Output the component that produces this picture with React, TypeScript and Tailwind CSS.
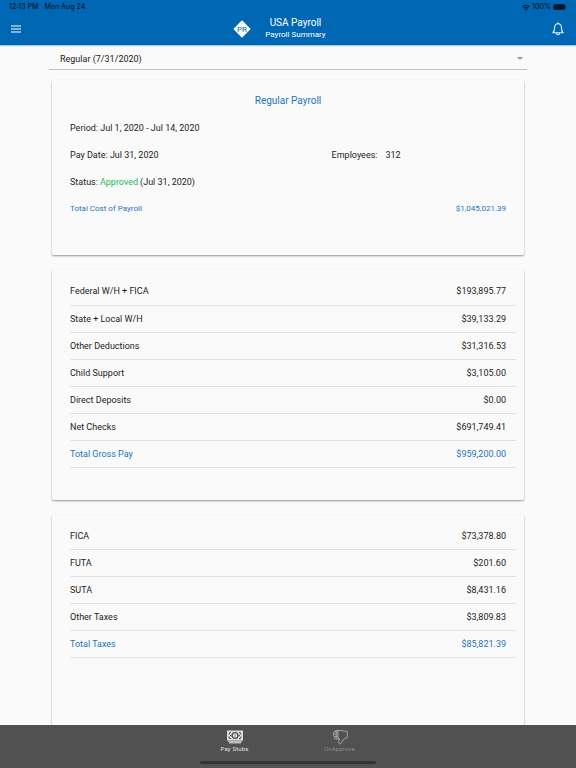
import React from 'react';

type Line = { label: string; amount: string; total?: boolean };

const withholdings: Line[] = [
  { label: 'Federal W/H + FICA', amount: '$193,895.77' },
  { label: 'State + Local W/H', amount: '$39,133.29' },
  { label: 'Other Deductions', amount: '$31,316.53' },
  { label: 'Child Support', amount: '$3,105.00' },
  { label: 'Direct Deposits', amount: '$0.00' },
  { label: 'Net Checks', amount: '$691,749.41' },
  { label: 'Total Gross Pay', amount: '$959,200.00', total: true },
];

const taxes: Line[] = [
  { label: 'FICA', amount: '$73,378.80' },
  { label: 'FUTA', amount: '$201.60' },
  { label: 'SUTA', amount: '$8,431.16' },
  { label: 'Other Taxes', amount: '$3,809.83' },
  { label: 'Total Taxes', amount: '$85,821.39', total: true },
];

const MenuIcon = () => (
  <svg className="h-2 w-[10px]" viewBox="0 0 20 16" stroke="#fff" strokeWidth="2.4">
    <path d="M0 2h20M0 8h20M0 14h20" />
  </svg>
);

const WifiIcon = () => (
  <svg className="h-[7px] w-2" viewBox="0 0 16 13" fill="none" stroke="#04182b" strokeWidth="2.6">
    <path d="M1 5.2a10 10 0 0 1 14 0" />
    <path d="M3.8 8.2a6 6 0 0 1 8.4 0" />
    <path d="M8 12.8 5.4 10a3.8 3.8 0 0 1 5.2 0z" fill="#04182b" stroke="none" />
  </svg>
);

const BatteryIcon = () => (
  <svg className="h-[6px] w-[14px]" viewBox="0 0 28 12" fill="#04182b">
    <rect x="0.5" y="0.5" width="24" height="11" rx="3" />
    <path d="M25.6 4v4c1-.3 1.6-1.1 1.6-2s-.6-1.7-1.6-2z" />
  </svg>
);

const BellIcon = () => (
  <svg className="h-[14px] w-3" viewBox="0 0 24 28" fill="none" stroke="#e8f5ff" strokeWidth="2.2" strokeLinejoin="round">
    <path d="M12 3.5c-4.3 0-6.8 3.2-6.8 7.5 0 6-1.2 8.5-3.4 10.5h20.4c-2.2-2-3.4-4.5-3.4-10.5 0-4.3-2.5-7.5-6.8-7.5z" />
    <path d="M10.5 3.2a1.6 1.6 0 0 1 3 0" />
    <path d="M8.8 22c.3 2.3 1.5 3.5 3.2 3.5s2.9-1.2 3.2-3.5" />
  </svg>
);

const LogoIcon = () => (
  <svg className="h-[18px] w-[18px]" viewBox="0 0 18 18">
    <rect x="2.8" y="2.8" width="12.4" height="12.4" rx="0.8" fill="#fff" transform="rotate(45 9 9)" />
    <text x="9" y="11.5" textAnchor="middle" fontFamily="Roboto, sans-serif" fontSize="8" fill="#0067b5">PR</text>
  </svg>
);

const MoneyIcon = () => (
  <svg className="h-[14px] w-4" viewBox="0 0 32 28">
    <rect x="0" y="1" width="32" height="20" fill="#dcdcdc" />
    <path d="M2 21h28v3H2zM4 24h24v3H4z" fill="#bdbdbd" />
    <path d="M8 4.500C5 5 4 7 4 9M8 17.500c-3-.5-4-2.500-4-4.500M24 4.500c3 .5 4 2.500 4 4.500M24 17.500c3-.5 4-2.500 4-4.500" fill="none" stroke="#515151" strokeWidth="2.2" />
    <circle cx="16" cy="11" r="5.800" fill="#dcdcdc" stroke="#515151" strokeWidth="2.8" />
    <path d="M16 8.500v5" stroke="#9a9a9a" strokeWidth="2" />
    <circle cx="7.200" cy="11" r="1.300" fill="#515151" />
    <circle cx="24.800" cy="11" r="1.300" fill="#515151" />
  </svg>
);

const ThumbDownIcon = () => (
  <svg className="h-4 w-4" viewBox="0 0 32 32" fill="none" stroke="#a6a6a6" strokeWidth="1.900" strokeLinejoin="round" strokeLinecap="round">
    <path d="M12 3.500C15 2.500 20 2.500 25 4.500l5-.5c1 4.500 1 9 0 14l-4.500 1c-2.500 1.500-4 3.500-5 6l-3.500 4.500c-1.500 1-3.500 0-3.500-2 0-2.500.5-5 1.500-7.500" />
    <path d="M15 20H7.500C4 20 3.500 16 5.800 15 2 14.800 1.500 11 4.300 10 2 9 2.500 5.800 5.500 5.500 5.500 3 7.500 2.500 12 3" />
    <path d="M5.800 15H11M4.300 10H11M5.500 5.500H11M12 3.500v16M8.500 6v12" />
  </svg>
);

const LineTable = ({ lines, name }: { lines: Line[]; name: string }) => (
  <table className="w-full" aria-label={name}>
    <tbody>
      {lines.map(line => (
        <tr key={line.label} className={`h-[27px] border-b border-[#e2e2e2] ${line.total ? 'text-[#1c75bc]' : ''}`}>
          <th scope="row" className="p-0 text-left font-normal">{line.label}</th>
          <td className="py-0 pr-[10px] pl-0 text-right">{line.amount}</td>
        </tr>
      ))}
    </tbody>
  </table>
);

const Card = ({ children }: { children: React.ReactNode }) => (
  <section className="mx-[3px] rounded-xs bg-[#fafafa] pt-2 pr-2 pb-8 pl-[18px] shadow-[0_1px_2px_rgba(0,0,0,0.4)]">
    {children}
  </section>
);

const App: React.FC = () => {
  return (
    <div className="flex h-screen flex-col bg-[#fafafa] font-[Roboto,sans-serif] text-[9px] leading-3 text-[#1c1c1c]">
      <header className="h-[45px] shrink-0 bg-[#0067b5] text-white shadow-[0_1px_1px_rgba(0,103,181,0.35)]">
        <div className="flex h-[14px] items-center justify-between px-[9px] font-[Inter,sans-serif] text-[7px] font-medium text-[#04182b]">
          <div className="flex gap-[6px]">
            <span>12:13 PM</span>
            <span>Mon Aug 24</span>
          </div>
          <div className="flex items-center gap-[2px]">
            <WifiIcon />
            <span>100%</span>
            <BatteryIcon />
          </div>
        </div>
        <div className="grid h-[30px] grid-cols-[16fr_auto_15fr] items-center pr-3 pl-[11px]">
          <div className="flex items-center justify-between">
            <button aria-label="Menu">
              <MenuIcon />
            </button>
            <div className="pr-[14px]">
              <LogoIcon />
            </div>
          </div>
          <div className="text-center">
            <h1 className="text-[10px]">USA Payroll</h1>
            <p className="text-[8px]">Payroll Summary</p>
          </div>
          <button aria-label="Notifications" className="justify-self-end">
            <BellIcon />
          </button>
        </div>
      </header>

      <main className="flex min-h-0 flex-1 flex-col overflow-hidden px-[49px]">
        <div className="relative mb-[10px] shrink-0 border-b border-[#c4c4c4]">
          <select aria-label="Payroll" className="h-6 w-full appearance-none bg-transparent pt-[3px] pl-[11px]">
            <option>Regular (7/31/2020)</option>
          </select>
          <svg className="pointer-events-none absolute top-3 right-1 h-[3px] w-[6px]" viewBox="0 0 6 3">
            <path d="M0 0h6L3 3z" fill="#999" />
          </svg>
        </div>

        <div className="flex flex-col gap-[15px]">
          <Card>
            <h2 className="flex h-[26px] items-center justify-center pr-[10px] text-[10px] text-[#1c75bc]">Regular Payroll</h2>
            <p className="flex h-[27px] items-center">Period: Jul 1, 2020 - Jul 14, 2020</p>
            <div className="grid h-[27px] grid-cols-[3fr_2fr] items-center pr-[10px]">
              <p>Pay Date: Jul 31, 2020</p>
              <p className="flex gap-2"><span>Employees:</span><span>312</span></p>
            </div>
            <p className="flex h-[27px] items-center gap-[2px]">
              Status: <span className="text-[#1fb95a]">Approved</span> (Jul 31, 2020)
            </p>
            <p className="flex h-7 items-center justify-between pr-[10px] text-[8px] text-[#1c75bc]">
              <span>Total Cost of Payroll</span>
              <span>$1,045,021.39</span>
            </p>
          </Card>
          <Card>
            <LineTable lines={withholdings} name="Gross pay" />
          </Card>
          <Card>
            <LineTable lines={taxes} name="Taxes" />
            <div className="h-20" />
          </Card>
        </div>
      </main>

      <footer className="flex h-[43px] shrink-0 flex-col justify-between bg-[#515151] pt-1 pb-1 text-[6px] leading-2">
        <nav className="flex justify-center gap-[57px] pr-[2px] tracking-wide">
          <button className="flex w-12 flex-col items-center text-[#e0e0e0]">
            <span className="flex h-4 items-center"><MoneyIcon /></span>
            Pay Stubs
          </button>
          <button className="flex w-12 flex-col items-center text-[#8c8c8c]">
            <span className="flex h-4 items-center"><ThumbDownIcon /></span>
            UnApprove
          </button>
        </nav>
        <div className="h-[3px] w-[176px] self-center rounded-full bg-[#353535]" />
      </footer>
    </div>
  );
};

export default App;
